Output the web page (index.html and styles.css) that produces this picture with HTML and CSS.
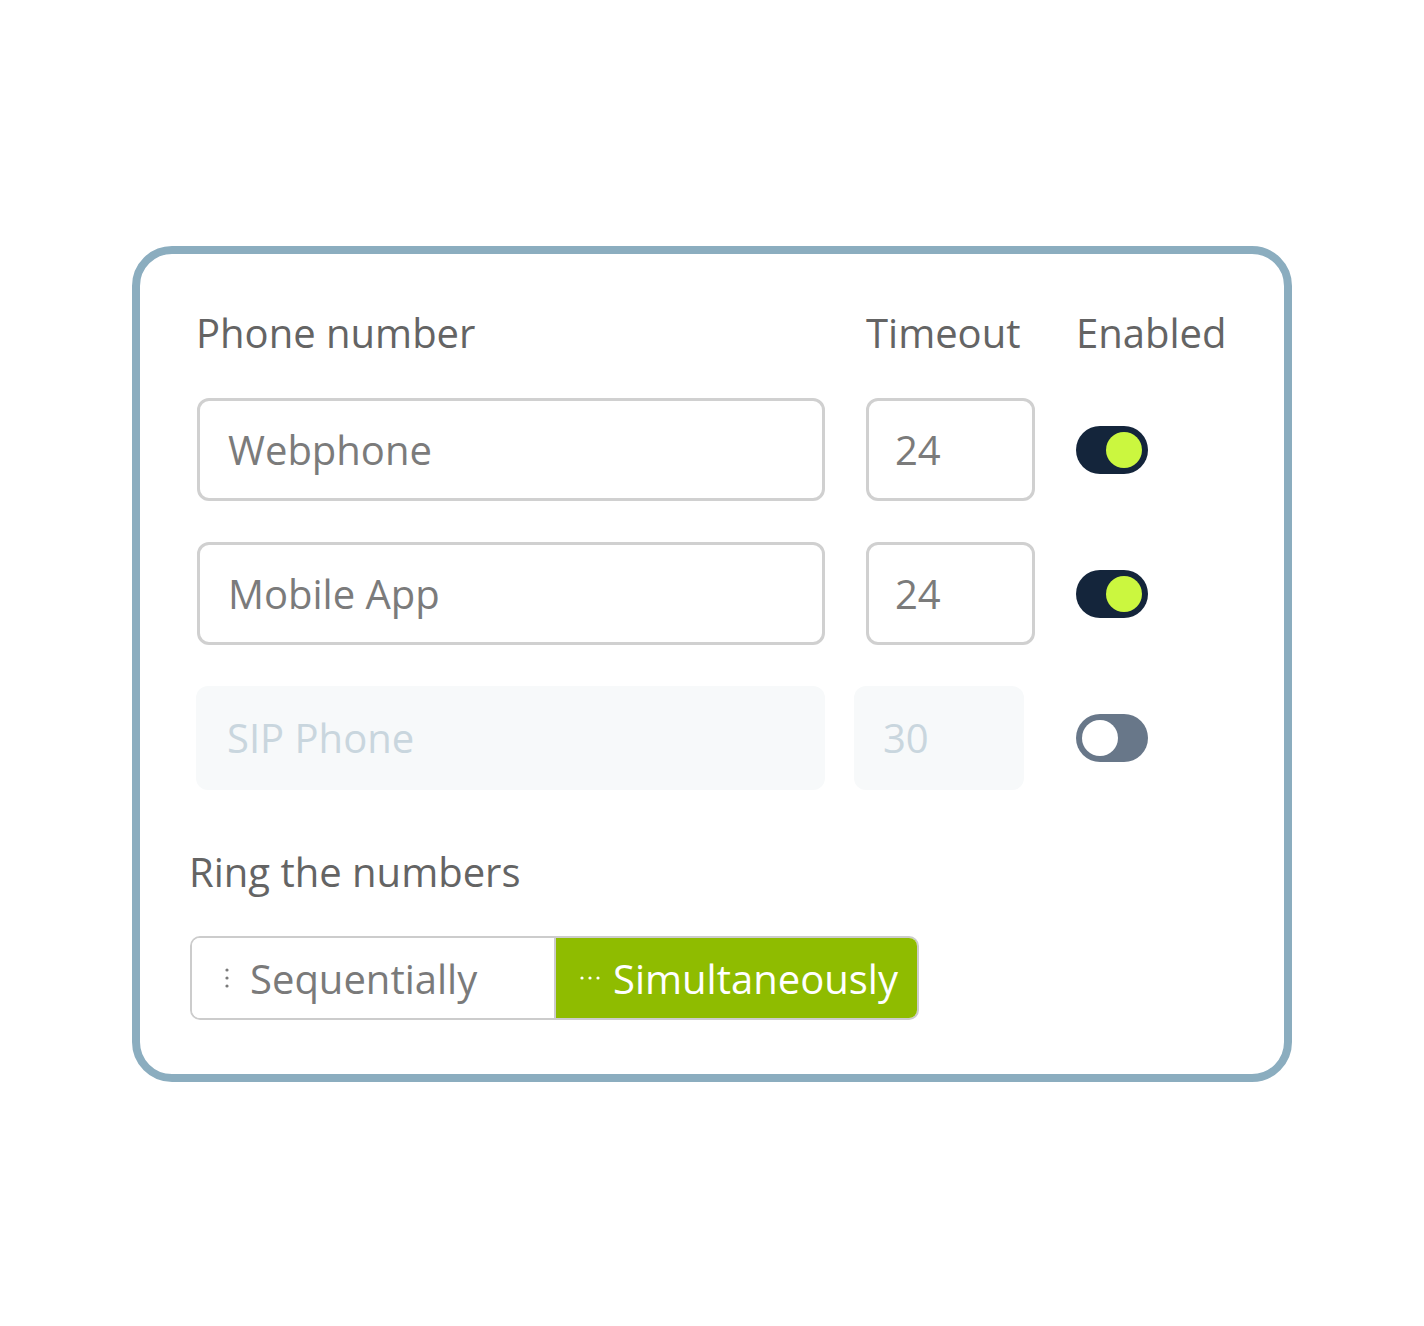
FILE: index.html
```html
<!DOCTYPE html>
<html lang="en">
<head>
<meta charset="utf-8">
<title>Ring settings</title>
<link rel="stylesheet" href="styles.css">
</head>
<body>
<main class="card">
  <div class="grid">
    <div class="th th-phone">Phone number</div>
    <div class="th">Timeout</div>
    <div class="th">Enabled</div>

    <div class="field">Webphone</div>
    <div class="field num">24</div>
    <div class="toggle on"><span class="knob"></span></div>

    <div class="field">Mobile App</div>
    <div class="field num">24</div>
    <div class="toggle on"><span class="knob"></span></div>

    <div class="field disabled">SIP Phone</div>
    <div class="field num disabled num-disabled">30</div>
    <div class="toggle off"><span class="knob"></span></div>
  </div>

  <section class="ring">
    <div class="ring-label">Ring the numbers</div>
    <div class="seg">
      <div class="seg-btn seg-seq">
        <svg class="icon-v" width="4" height="20" viewBox="0 0 4 20"><circle cx="2" cy="2" r="1.6" fill="#7a7a7a"/><circle cx="2" cy="10" r="1.6" fill="#7a7a7a"/><circle cx="2" cy="18" r="1.6" fill="#7a7a7a"/></svg>
        <span>Sequentially</span>
      </div>
      <div class="seg-btn seg-sim active">
        <svg class="icon-h" width="20" height="4" viewBox="0 0 20 4"><circle cx="2" cy="2" r="1.6" fill="#fff"/><circle cx="10" cy="2" r="1.6" fill="#fff"/><circle cx="18" cy="2" r="1.6" fill="#fff"/></svg>
        <span>Simultaneously</span>
      </div>
    </div>
  </section>
</main>
</body>
</html>
```

FILE: styles.css
```css
html, body {
  margin: 0;
  padding: 0;
}

body {
  box-sizing: border-box;
  min-height: 100vh;
  display: flex;
  align-items: flex-start;
  justify-content: center;
  padding-top: 246px;
  background: #ffffff;
  font-family: "Open Sans", "Noto Sans", sans-serif;
  font-size: 40px;
}

.card {
  box-sizing: border-box;
  width: 1160px;
  border: 8px solid #8badbf;
  border-radius: 40px;
  padding: 52px 0 54px 57px;
  background: #fff;
}

.grid {
  display: grid;
  grid-template-columns: 628px 169px 72px;
  grid-template-rows: 51px 103px 103px 103px;
  column-gap: 41px;
  row-gap: 41px;
  align-items: center;
}

.th {
  align-self: start;
  line-height: 54px;
  color: #646464;
  white-space: nowrap;
}

.th-phone {
  margin-left: -1px;
}

.field {
  box-sizing: border-box;
  height: 103px;
  border: 3px solid #d0d0d0;
  border-radius: 12px;
  padding-left: 28px;
  display: flex;
  align-items: center;
  color: #7b7b7b;
  white-space: nowrap;
}

.field.num {
  padding-left: 26px;
}

.field.disabled {
  border-color: transparent;
  background: #f7f9fa;
  color: #c9d6de;
  height: 104px;
  margin-left: -1px;
}

.field.num-disabled {
  margin-left: -12px;
  width: 170px;
}

.toggle {
  box-sizing: border-box;
  width: 72px;
  height: 48px;
  border-radius: 24px;
  padding: 0 6px;
  display: flex;
  align-items: center;
}

.toggle.on {
  background: #14253b;
  justify-content: flex-end;
}

.toggle.off {
  background: #687789;
  justify-content: flex-start;
}

.knob {
  width: 36px;
  height: 36px;
  border-radius: 50%;
}

.toggle.on .knob {
  background: #cbf73f;
}

.toggle.off .knob {
  background: #ffffff;
}

.ring {
  margin-top: 56px;
  margin-left: -7px;
}

.ring-label {
  line-height: 54px;
  color: #646464;
  margin-left: -1px;
}

.seg {
  box-sizing: border-box;
  margin-top: 37px;
  width: 729px;
  height: 84px;
  border: 2px solid #cccccc;
  border-radius: 10px;
  overflow: hidden;
  display: flex;
}

.seg-btn {
  box-sizing: border-box;
  display: flex;
  align-items: center;
  white-space: nowrap;
}

.seg-seq {
  flex: 0 0 364px;
  border-right: 2px solid #cccccc;
  padding-left: 33px;
  gap: 21px;
  color: #7a7a7a;
  background: #fff;
}

.seg-sim {
  flex: 1 1 auto;
  padding-left: 24px;
  gap: 13px;
  background: #8fbc00;
  color: #ffffff;
}

.icon-v, .icon-h {
  display: block;
  flex: none;
}
```
